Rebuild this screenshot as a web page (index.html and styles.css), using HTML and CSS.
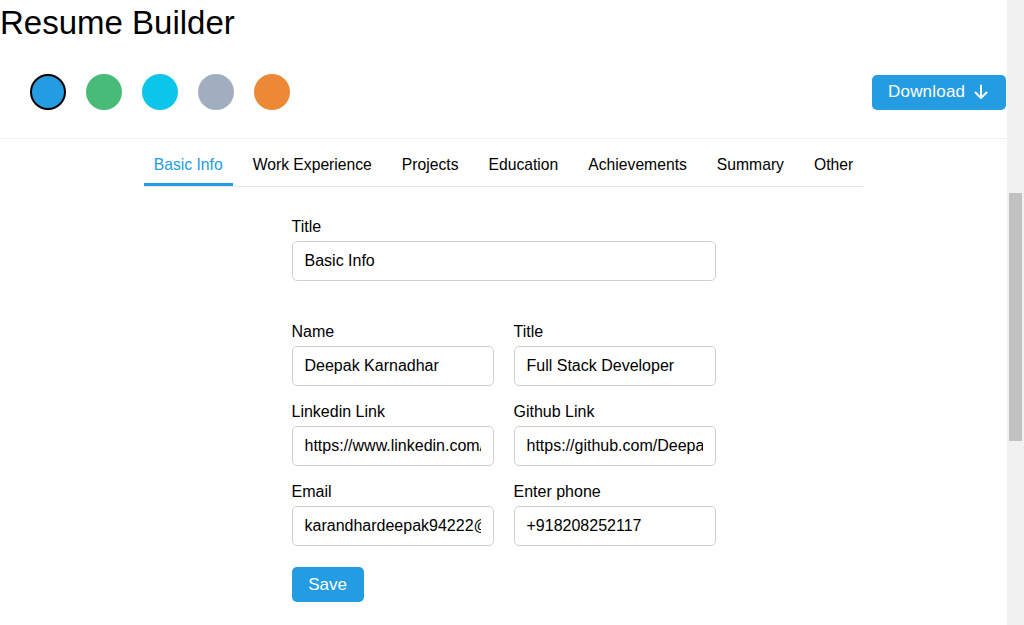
FILE: index.html
```html
<!DOCTYPE html>
<html lang="en">
<head>
<meta charset="utf-8">
<title>Resume Builder</title>
<link rel="stylesheet" href="styles.css">
</head>
<body>
<div class="page">
  <main class="main">
    <h1 class="title">Resume Builder</h1>
    <div class="toolbar">
      <div class="colors">
        <span class="color active" style="background:#239ce2"></span>
        <span class="color" style="background:#48bb78"></span>
        <span class="color" style="background:#0bc5ea"></span>
        <span class="color" style="background:#a0aec0"></span>
        <span class="color" style="background:#ed8936"></span>
      </div>
      <button class="btn download">Download
        <svg class="arrow" width="16" height="16" viewBox="0 0 16 16" fill="none" stroke="#fff" stroke-width="2" stroke-linecap="round" stroke-linejoin="round"><path d="M8 1.5v12.5M2.5 8.5L8 14l5.5-5.5"/></svg>
      </button>
    </div>
    <div class="tabs-wrap">
      <nav class="tabs">
        <span class="tab active">Basic Info</span>
        <span class="tab">Work Experience</span>
        <span class="tab">Projects</span>
        <span class="tab">Education</span>
        <span class="tab">Achievements</span>
        <span class="tab">Summary</span>
        <span class="tab">Other</span>
      </nav>
    </div>
    <form class="form">
      <div class="field">
        <label class="label">Title</label>
        <input class="input" type="text" value="Basic Info">
      </div>
      <div class="grid">
        <div class="field">
          <label class="label">Name</label>
          <input class="input" type="text" value="Deepak Karnadhar">
        </div>
        <div class="field">
          <label class="label">Title</label>
          <input class="input" type="text" value="Full Stack Developer">
        </div>
        <div class="field">
          <label class="label">Linkedin Link</label>
          <input class="input" type="text" value="https://www.linkedin.com/in/deepak-karnadhar">
        </div>
        <div class="field">
          <label class="label">Github Link</label>
          <input class="input" type="text" value="https://github.com/Deepak">
        </div>
        <div class="field">
          <label class="label">Email</label>
          <input class="input" type="text" value="karandhardeepak94222@gmail.com">
        </div>
        <div class="field">
          <label class="label">Enter phone</label>
          <input class="input" type="text" value="+918208252117">
        </div>
      </div>
      <button type="button" class="btn save">Save</button>
    </form>
  </main>
  <div class="scrollbar"><div class="thumb"></div></div>
</div>
</body>
</html>
```
FILE: styles.css
```css
html, body {
  margin: 0;
  padding: 0;
  height: 100%;
  overflow: hidden;
  background: #fff;
  font-family: "Liberation Sans", Arial, sans-serif;
  color: #000;
}

.page {
  display: flex;
  height: 625px;
}

.main {
  flex: 1;
  min-width: 0;
}

.title {
  margin: 0;
  padding: 4px 0 0 0;
  font-size: 33px;
  font-weight: 400;
  line-height: 38px;
}

.toolbar {
  display: flex;
  justify-content: space-between;
  align-items: center;
  margin-top: 32px;
  padding: 0 1px 28px 30px;
  border-bottom: 1px solid #f0f0f0;
}

.colors {
  display: flex;
  gap: 20px;
}

.color {
  width: 36px;
  height: 36px;
  border-radius: 50%;
  box-sizing: border-box;
}

.color.active {
  border: 2px solid #000;
}

.btn {
  border: none;
  background: #239ce2;
  color: #fff;
  font-family: "Liberation Sans", Arial, sans-serif;
  border-radius: 5px;
  cursor: pointer;
}

.download {
  display: flex;
  align-items: center;
  gap: 8px;
  height: 35px;
  width: 134px;
  padding: 0 0 0 16px;
  font-size: 17px;
  letter-spacing: 0.2px;
}

.arrow {
  display: block;
}

.tabs-wrap {
  display: flex;
  justify-content: center;
  padding-top: 17px;
}

.tabs {
  display: flex;
  gap: 10px;
  border-bottom: 1px solid #e6e6e6;
}

.tab {
  padding: 0 10px 9px;
  font-size: 15.7px;
  line-height: 18px;
  border-bottom: 3px solid transparent;
  color: #000;
}

.tab.active {
  color: #239ce2;
  border-bottom-color: #239ce2;
}

.form {
  width: 424px;
  margin: 0 auto;
  padding-top: 30px;
}

.field {
  display: flex;
  flex-direction: column;
  gap: 4px;
  min-width: 0;
}

.label {
  font-size: 16px;
  line-height: 20px;
}

.input {
  box-sizing: border-box;
  height: 40px;
  width: 100%;
  padding: 0 12px;
  border: 1px solid #d0d0d0;
  border-radius: 5px;
  font-family: "Liberation Sans", Arial, sans-serif;
  font-size: 16px;
  color: #000;
  background: #fff;
  outline: none;
}

.grid {
  display: grid;
  grid-template-columns: 1fr 1fr;
  column-gap: 20px;
  row-gap: 16px;
  margin-top: 41px;
}

.save {
  display: block;
  margin-top: 21px;
  width: 72px;
  height: 35px;
  font-size: 17px;
  padding: 0;
}

.scrollbar {
  width: 17px;
  flex: none;
  background: #f1f1f1;
  padding-top: 193px;
  box-sizing: border-box;
}

.thumb {
  width: 13px;
  height: 248px;
  margin-left: 2px;
  background: #c1c1c1;
}
```
